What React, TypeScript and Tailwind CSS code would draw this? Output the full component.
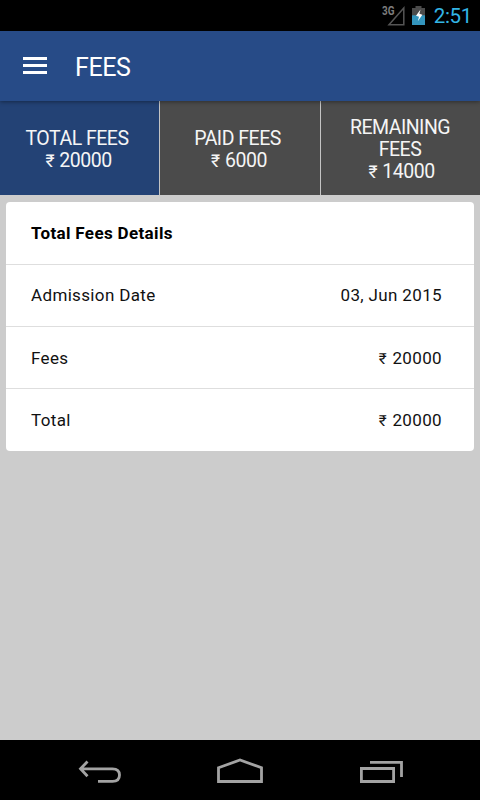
import { useState } from 'react';

type FeeTab = {
  id: string;
  title: string;
  amount: string;
}

type DetailRow = {
  label: string;
  value: string;
  isAmount?: boolean;
}

const tabs: FeeTab[] = [
  { id: 'total', title: 'TOTAL FEES', amount: '20000' },
  { id: 'paid', title: 'PAID FEES', amount: '6000' },
  { id: 'remaining', title: 'REMAINING FEES', amount: '14000' },
];

const rows: DetailRow[] = [
  { label: 'Admission Date', value: '03, Jun 2015' },
  { label: 'Fees', value: '20000', isAmount: true },
  { label: 'Total', value: '20000', isAmount: true },
];

function Amount({ value }: { value: string }) {
  return (
    <span>
      <span className="mr-[1px] text-[0.9em] leading-none">₹</span> {value}
    </span>
  )
}

function StatusBar() {
  return (
    <div className="flex h-[31px] items-center justify-end bg-black pr-[8px]">
      <svg width="46" height="31" viewBox="380 0 46 31" className="mr-[8px]">
        <text x="382" y="14.5" fontSize="12" fontWeight="700" fill="#7d7d7d" textLength="12.5" lengthAdjust="spacingAndGlyphs">3G</text>
        <path d="M389 24.8H403.8V8Z" fill="none" stroke="#555" strokeWidth="1.5" />
        <path d="M415.5 6h6v2h3.5v17h-13V8h3.5z" fill="#4b4b4b" />
        <path d="M412 15.3h13V25h-13z" fill="#3395bd" />
        <path d="M420.5 9.5l-4.5 6.2 3 1-1.2 4.5 4.6-6.4-3-1z" fill="#fff" />
      </svg>
      <span className="pt-px text-[20.5px] leading-[31px] tracking-[-0.3px] text-[#33b5e5]">2:51</span>
    </div>
  )
}

function Header() {
  return (
    <header className="relative z-10 flex h-[70px] items-center bg-[#274b87] pl-[23px] shadow-[0_1px_4px_rgba(0,0,0,0.4)]">
      <button aria-label="Menu" className="mb-px flex flex-col gap-[4px]">
        <span className="h-[3px] w-6 bg-white" />
        <span className="h-[3px] w-6 bg-white" />
        <span className="h-[3px] w-6 bg-white" />
      </button>
      <h1 className="ml-[28px] pt-[4px] text-[25px] leading-[30px] tracking-[-0.4px] text-white">FEES</h1>
    </header>
  )
}

function NavBar() {
  return (
    <nav className="flex h-[60px] items-center justify-center bg-black">
      <svg width="140" height="60" viewBox="30 740 140 60" fill="none" stroke="#a3a3a3" strokeWidth="2.8">
        <path d="M87.5 761.5L80.5 768.8L87.5 776.2M81 768.8H112.5C117 768.8 119.5 771 119.5 775C119.5 779 117 781.4 112.5 781.4H98" />
      </svg>
      <svg width="140" height="60" viewBox="170 740 140 60" fill="none" stroke="#a3a3a3" strokeWidth="2.8">
        <path d="M218.5 767.8L240 760L261.5 767.8V781.5H218.5Z" />
      </svg>
      <svg width="140" height="60" viewBox="310 740 140 60" fill="none" stroke="#a3a3a3" strokeWidth="2.8">
        <path d="M361.4 768.5H393.6V781.5H361.4ZM370 762.4H401.5V777" />
      </svg>
    </nav>
  )
}

export default function App() {

  const [active, setActive] = useState('total');

  return (
    <div className="flex h-[800px] w-[480px] flex-col overflow-hidden bg-[#cccccc] font-['Roboto','Noto_Sans',sans-serif]">
      <StatusBar />
      <Header />

      <div className="grid h-[94px] grid-cols-[160px_161px_159px]">
        {tabs.map(tab => (
          <button
            key={tab.id}
            onClick={() => setActive(tab.id)}
            className={`flex flex-col items-center justify-center border-r border-[#c4c4c4] pt-[3px] pr-[5px] text-[19.5px] leading-[22px] tracking-[-0.5px] text-[#f5f5f5] last:border-r-0 last:pr-px ${active === tab.id ? 'bg-[#234275]' : 'bg-[#4b4b4b]'}`}
          >
            <span className="w-[130px]">{tab.title}</span>
            <span className="pl-[3px]"><Amount value={tab.amount} /></span>
          </button>
        ))}
      </div>

      <main className="flex-1 px-[6px] pt-[7px]">
        <section className="rounded-[4px] bg-white text-[17px] leading-[22px] tracking-[0.35px] text-[#111]">
          <h2 className="flex h-[61.6px] items-center px-[25px] pt-px font-bold text-black">Total Fees Details</h2>
          {rows.map(row => (
            <div key={row.label} className="flex h-[62.4px] items-center justify-between border-t border-[#dedede] pr-[32px] pl-[25px]">
              <span>{row.label}</span>
              {row.isAmount ? <Amount value={row.value} /> : <span>{row.value}</span>}
            </div>
          ))}
        </section>
      </main>

      <NavBar />
    </div>
  )
}
